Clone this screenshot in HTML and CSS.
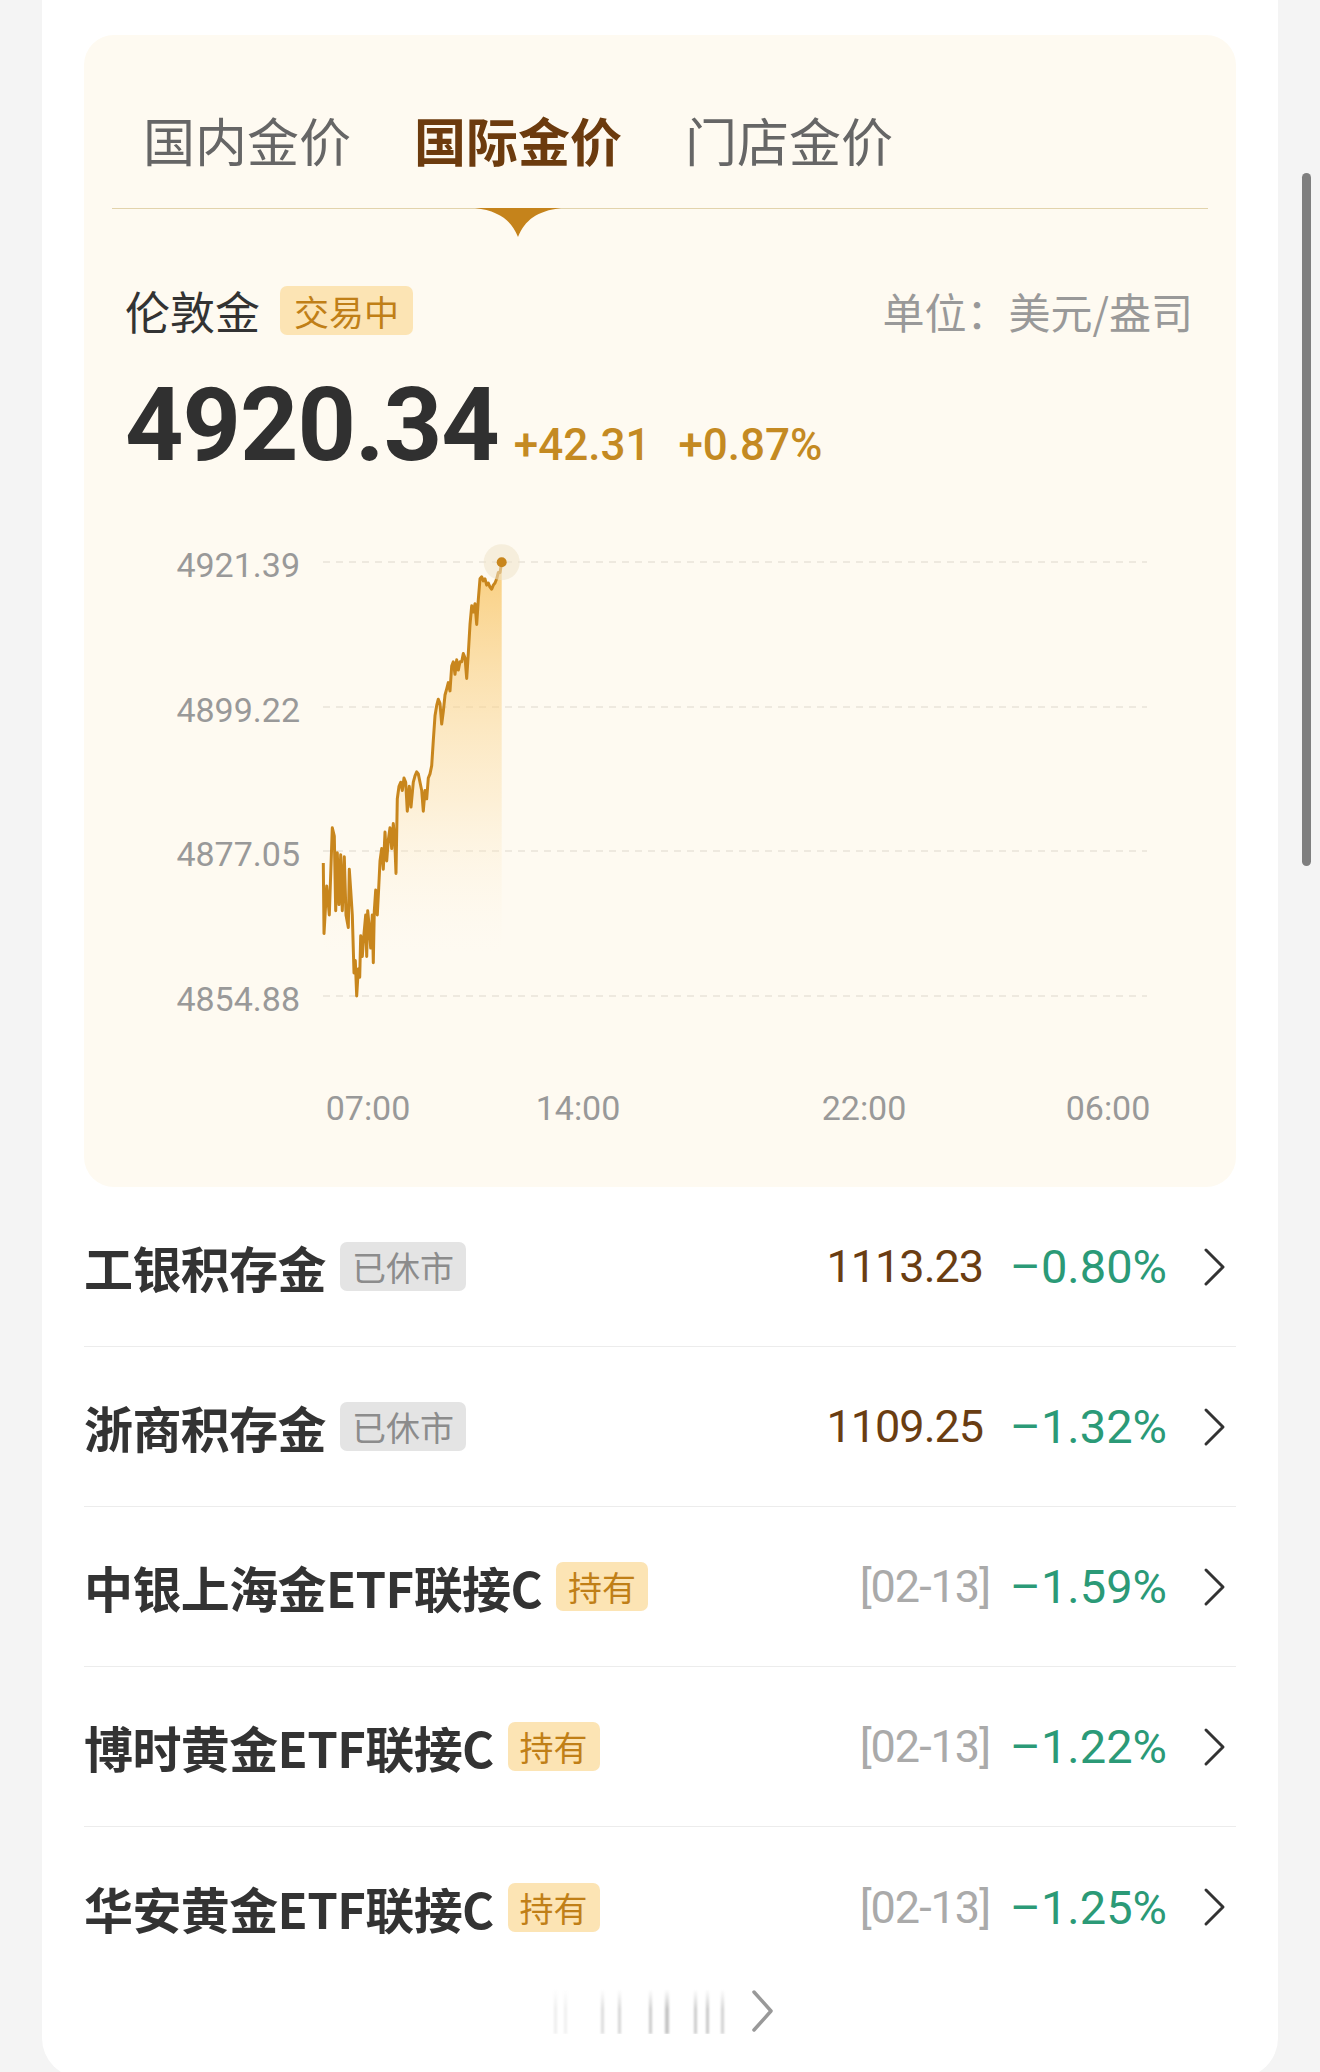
FILE: index.html
```html
<!DOCTYPE html>
<html lang="zh-CN">

<head>
    <meta charset="UTF-8">
    <meta name="viewport" content="width=device-width, initial-scale=1.0">
    <title>金价</title>
    <link rel="stylesheet" href="styles.css">
</head>

<body>
    <div class="card">
        <!-- 金价面板 -->
        <section class="panel">
            <div class="tabs">
                <span class="tab">国内金价</span>
                <span class="tab active">国际金价
                    <svg class="tab-arrow" viewBox="0 0 86 29"><path d="M0 0 H86 C62 3 50 12 43 29 C36 12 24 3 0 0 Z" /></svg>
                </span>
                <span class="tab">门店金价</span>
            </div>

            <div class="quote">
                <div class="quote-head">
                    <div class="quote-name">伦敦金<span class="badge badge-gold">交易中</span></div>
                    <div class="quote-unit">单位：美元/盎司</div>
                </div>
                <div class="quote-price">
                    <span class="price">4920.34</span>
                    <span class="change">+42.31</span>
                    <span class="change">+0.87%</span>
                </div>
            </div>

            <div class="chart">
                <div class="y-axis">
                    <span>4921.39</span>
                    <span>4899.22</span>
                    <span>4877.05</span>
                    <span>4854.88</span>
                </div>
                <svg class="plot" width="824" height="454" viewBox="0 0 824 454">
                    <defs>
                        <linearGradient id="area" x1="0" y1="10" x2="0" y2="444" gradientUnits="userSpaceOnUse">
                            <stop offset="0" stop-color="#f8c463" stop-opacity="0.8" />
                            <stop offset="0.55" stop-color="#fbdca3" stop-opacity="0.35" />
                            <stop offset="0.9" stop-color="#fdf3e0" stop-opacity="0" />
                        </linearGradient>
                    </defs>
                    <g class="grid">
                        <line x1="0" y1="10" x2="824" y2="10" />
                        <line x1="0" y1="155" x2="824" y2="155" />
                        <line x1="0" y1="299" x2="824" y2="299" />
                        <line x1="0" y1="444" x2="824" y2="444" />
                    </g>
                    <polygon class="area" points="0.3,311.1 1,381.6 3.7,333.9 6.3,362.9 9.3,275.8 11.3,284.1 12.7,358.8 14.3,300.7 16,352.6 17.7,302.8 19.3,358.8 21.3,304.8 23,362.9 25.3,375.4 26.3,317.3 27.7,338 29.3,362.9 31,421 32.3,408.6 33.7,443.9 35.3,416.9 36.7,425.2 37.7,383.7 39.3,404.4 41,381.6 42.7,362.9 43.7,404.4 44.7,358.8 46.3,375.4 47.7,396.1 49.3,362.9 50.3,410.7 51.3,358.8 52.7,338 54.3,362.9 55.7,336 57,309 58.7,296.6 60.3,317.3 62,280 63.7,309 65.3,288.2 67,275.8 68.7,296.6 70.3,271.6 71.7,288.2 73,321.4 74.3,246.8 76,234.3 77.7,230.2 79.3,238.5 81,226 82.7,230.2 84.3,259.2 86.3,234.3 88,255.1 90.3,230.2 92,223.9 93.7,219.8 95.3,221.9 97,230.2 98.7,238.5 100.3,259.2 102,238.5 103.7,246.8 105.3,226 107,221.9 108.7,213.6 110.3,188.7 112,163.8 113.7,153.4 115.3,147.2 117,151.3 118.7,172.1 120.3,159.6 122,143 123.7,136.8 125.3,130.6 127,138.9 128.7,114 130.3,109.8 132,122.3 133.7,107.8 135.3,118.1 137,109.8 138.7,109.8 140.3,101.5 142,105.7 143.7,126.4 145.3,101.5 147,72.5 148.7,53.8 150.3,60 152,51.7 153.7,72.5 155.3,47.6 157,26.8 158.7,24.8 160.3,28.9 162,26.8 163.7,33.1 165.3,31 167,35.1 168.7,37.2 170.3,33.1 172,31 173.7,26.8 175.3,20.6 177,20.6 178.7,10.2 178.7,444 0.3,444" />
                    <polyline class="line" points="0.3,311.1 1,381.6 3.7,333.9 6.3,362.9 9.3,275.8 11.3,284.1 12.7,358.8 14.3,300.7 16,352.6 17.7,302.8 19.3,358.8 21.3,304.8 23,362.9 25.3,375.4 26.3,317.3 27.7,338 29.3,362.9 31,421 32.3,408.6 33.7,443.9 35.3,416.9 36.7,425.2 37.7,383.7 39.3,404.4 41,381.6 42.7,362.9 43.7,404.4 44.7,358.8 46.3,375.4 47.7,396.1 49.3,362.9 50.3,410.7 51.3,358.8 52.7,338 54.3,362.9 55.7,336 57,309 58.7,296.6 60.3,317.3 62,280 63.7,309 65.3,288.2 67,275.8 68.7,296.6 70.3,271.6 71.7,288.2 73,321.4 74.3,246.8 76,234.3 77.7,230.2 79.3,238.5 81,226 82.7,230.2 84.3,259.2 86.3,234.3 88,255.1 90.3,230.2 92,223.9 93.7,219.8 95.3,221.9 97,230.2 98.7,238.5 100.3,259.2 102,238.5 103.7,246.8 105.3,226 107,221.9 108.7,213.6 110.3,188.7 112,163.8 113.7,153.4 115.3,147.2 117,151.3 118.7,172.1 120.3,159.6 122,143 123.7,136.8 125.3,130.6 127,138.9 128.7,114 130.3,109.8 132,122.3 133.7,107.8 135.3,118.1 137,109.8 138.7,109.8 140.3,101.5 142,105.7 143.7,126.4 145.3,101.5 147,72.5 148.7,53.8 150.3,60 152,51.7 153.7,72.5 155.3,47.6 157,26.8 158.7,24.8 160.3,28.9 162,26.8 163.7,33.1 165.3,31 167,35.1 168.7,37.2 170.3,33.1 172,31 173.7,26.8 175.3,20.6 177,20.6 178.7,10.2" />
                    <circle class="halo" cx="178.7" cy="10.2" r="18" />
                    <circle class="dot" cx="178.7" cy="10.2" r="5" />
                </svg>
            </div>

            <!-- 时间刻度 left 按时间算出来的 -->
            <div class="x-axis">
                <span style="left: 45px">07:00</span>
                <span style="left: 255px">14:00</span>
                <span style="left: 541px">22:00</span>
                <span style="left: 785px">06:00</span>
            </div>
        </section>

        <!-- 积存金 / 基金列表 -->
        <ul class="list">
            <li class="row">
                <div class="row-name">工银积存金<span class="badge badge-gray">已休市</span></div>
                <span class="row-price">1113.23</span>
                <span class="row-pct">–0.80%</span>
                <svg class="row-arrow" viewBox="0 0 24 40"><path d="M3 3 L20 20 L3 37" /></svg>
            </li>
            <li class="row">
                <div class="row-name">浙商积存金<span class="badge badge-gray">已休市</span></div>
                <span class="row-price">1109.25</span>
                <span class="row-pct">–1.32%</span>
                <svg class="row-arrow" viewBox="0 0 24 40"><path d="M3 3 L20 20 L3 37" /></svg>
            </li>
            <li class="row">
                <div class="row-name">中银上海金ETF联接C<span class="badge badge-gold">持有</span></div>
                <span class="row-date">[02-13]</span>
                <span class="row-pct">–1.59%</span>
                <svg class="row-arrow" viewBox="0 0 24 40"><path d="M3 3 L20 20 L3 37" /></svg>
            </li>
            <li class="row">
                <div class="row-name">博时黄金ETF联接C<span class="badge badge-gold">持有</span></div>
                <span class="row-date">[02-13]</span>
                <span class="row-pct">–1.22%</span>
                <svg class="row-arrow" viewBox="0 0 24 40"><path d="M3 3 L20 20 L3 37" /></svg>
            </li>
            <li class="row">
                <div class="row-name">华安黄金ETF联接C<span class="badge badge-gold">持有</span></div>
                <span class="row-date">[02-13]</span>
                <span class="row-pct">–1.25%</span>
                <svg class="row-arrow" viewBox="0 0 24 40"><path d="M3 3 L20 20 L3 37" /></svg>
            </li>
        </ul>

        <div class="more">
            <div class="more-lines"></div>
            <svg class="more-arrow" viewBox="0 0 24 44"><path d="M3 3 L20 22 L3 41" /></svg>
        </div>
    </div>

    <div class="scrollbar"></div>
</body>

</html>
```

FILE: styles.css
```css
html,
body {
    height: 2072px;
}

body {
    margin: 0;
    overflow: hidden;
    background-color: #f4f4f4;
    font-family: "Noto Sans CJK SC", sans-serif;
    color: #333;
    position: relative;
}

.card {
    width: 1236px;
    margin-left: 42px;
    padding: 35px 42px 43px;
    box-sizing: border-box;
    background-color: #fff;
    border-radius: 0 0 40px 40px;
}

/* 上面的奶油色面板 */
.panel {
    background-color: #fefaf1;
    border-radius: 30px;
    padding-bottom: 62px;
}

.tabs {
    margin: 0 28px;
    padding: 79px 0 0 31px;
    display: flex;
    gap: 63px;
    border-bottom: 1px solid #e2d3ac;
}

.tab {
    position: relative;
    font-size: 52px;
    line-height: 52px;
    padding-bottom: 42px;
    color: #666;
}

.tab.active {
    color: #6c3b0e;
    font-weight: 700;
}

.tab-arrow {
    position: absolute;
    /* 小三角 压在分割线上 */
    top: 100%;
    left: 50%;
    width: 86px;
    height: 29px;
    margin-left: -43px;
    fill: #c5831b;
}

.quote {
    padding: 77px 43px 0 41px;
}

.quote-head {
    display: flex;
    align-items: center;
    justify-content: space-between;
    height: 49px;
}

.quote-name {
    display: flex;
    align-items: center;
    gap: 20px;
    font-size: 45px;
    line-height: 49px;
    color: #333;
}

.quote-unit {
    font-size: 42px;
    color: #999;
}

.badge {
    display: inline-block;
    height: 49px;
    line-height: 49px;
    padding: 0 12px;
    font-size: 34px;
    font-weight: 400;
    letter-spacing: 0;
    border-radius: 7px;
}

.badge-gold {
    background-color: #fce4b4;
    color: #c07f17;
}

.badge-gray {
    background-color: #e4e4e4;
    color: #8c8c8c;
}

.quote-name .badge {
    font-size: 35px;
    padding: 0 14px;
}

.quote-price {
    display: flex;
    align-items: baseline;
    margin-top: 39px;
    font-family: Roboto, sans-serif;
}

.price {
    font-size: 102px;
    line-height: 1;
    font-weight: 700;
    letter-spacing: -1px;
    color: #303030;
    margin-right: 15px;
}

.change {
    font-size: 44px;
    line-height: 1;
    font-weight: 500;
    color: #c48a22;
    margin-right: 28px;
}

/* 走势图 */
.chart {
    display: flex;
    margin-top: 76px;
    height: 460px;
}

.y-axis {
    width: 216px;
    height: 460px;
    display: flex;
    flex-direction: column;
    justify-content: space-between;
    align-items: flex-end;
    margin-right: 23px;
    font-family: Roboto, sans-serif;
    font-size: 34px;
    line-height: 26px;
    color: #999;
}

.plot {
    overflow: visible;
}

.grid line {
    stroke: #e9e4d9;
    stroke-width: 1.5;
    stroke-dasharray: 7 6;
}

.area {
    fill: url(#area);
}

.line {
    fill: none;
    stroke: #c8861d;
    stroke-width: 3;
    stroke-linejoin: round;
}

.halo {
    fill: #efe3cb;
    opacity: 0.55;
}

.dot {
    fill: #c8861d;
}

.x-axis {
    position: relative;
    margin: 79px 0 0 239px;
    width: 824px;
    height: 34px;
    font-family: Roboto, sans-serif;
    font-size: 34px;
    line-height: 34px;
    color: #999;
}

.x-axis span {
    position: absolute;
    top: 0;
    transform: translateX(-50%);
}

/* 列表 */
.list {
    margin: 0;
    padding: 0;
    list-style: none;
}

.row {
    display: flex;
    align-items: center;
    height: 160px;
    box-sizing: border-box;
    border-bottom: 1px solid #ececec;
}

.row:last-child {
    border-bottom: none;
}

.row-name {
    display: flex;
    align-items: center;
    gap: 14px;
    font-size: 49px;
    font-weight: 700;
    letter-spacing: -0.6px;
    color: #333;
    margin-right: auto;
}

.row-price,
.row-date {
    font-family: Roboto, sans-serif;
    font-size: 45px;
    letter-spacing: -1px;
}

.row-pct {
    font-family: Roboto, sans-serif;
    font-size: 47px;
}

.row-price {
    color: #6a3d12;
    margin-right: 27px;
}

.row-date {
    color: #aaa;
    margin-right: 20px;
}

.row-pct {
    color: #2b9a77;
}

.row-arrow {
    width: 24px;
    height: 40px;
    margin: 0 9px 0 36px;
}

.row-arrow path,
.more-arrow path {
    fill: none;
    stroke: #333;
    stroke-width: 3;
    stroke-linecap: round;
    stroke-linejoin: round;
}

.more {
    display: flex;
    justify-content: center;
    align-items: center;
    gap: 25px;
    height: 48px;
}

.more-lines {
    width: 181px;
    height: 45px;
    background: linear-gradient(90deg,
            transparent 0 9px, #eee 9px 12px, transparent 12px 19px, #f0f0f0 19px 22px,
            transparent 22px 56px, #ddd 56px 59px, transparent 59px 73px, #d6d6d6 73px 76px,
            transparent 76px 104px, #ccc 104px 107px, transparent 107px 120px, #c4c4c4 120px 124px,
            transparent 124px 149px, #ccc 149px 152px, transparent 152px 161px, #c8c8c8 161px 164px,
            transparent 164px 176px, #d2d2d2 176px 179px, transparent 179px);
    filter: blur(1px);
    -webkit-mask-image: linear-gradient(180deg, transparent, #000 45%);
    mask-image: linear-gradient(180deg, transparent, #000 45%);
}

.more-arrow {
    width: 24px;
    height: 44px;
}

.more-arrow path {
    stroke: #999;
    stroke-width: 3.5;
}

/* 右边的滚动条 */
.scrollbar {
    position: absolute;
    top: 173px;
    left: 1302px;
    width: 9px;
    height: 693px;
    border-radius: 5px;
    background-color: #7f7f7f;
}
```
